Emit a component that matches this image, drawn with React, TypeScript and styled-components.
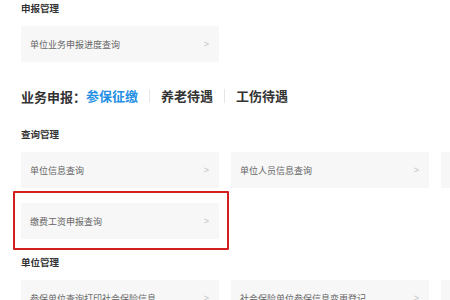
import React from "react";
import styled, { createGlobalStyle } from "styled-components";

const GlobalStyle = createGlobalStyle`
  html, body {
    margin: 0;
    padding: 0;
    background: #ffffff;
  }
  body {
    font-family: "Noto Sans CJK SC", "Noto Sans", sans-serif;
    overflow: hidden;
  }
`;

const sections = [
  {
    title: "查询管理",
    items: ["单位信息查询", "单位人员信息查询", "单位缴费信息查询", "缴费工资申报查询"],
    marked: "缴费工资申报查询",
  },
  {
    title: "单位管理",
    items: ["参保单位查询打印社会保险信息", "社会保险单位参保信息变更登记", "单位信息变更"],
    marked: "",
  },
];

const tabs = ["参保征缴", "养老待遇", "工伤待遇"];

function Card({ text, marked }: { text: string; marked?: boolean }) {
  return (
    <StCard $marked={marked}>
      <StCardText>{text}</StCardText>
      <StArrow>&gt;</StArrow>
    </StCard>
  );
}

function App() {
  return (
    <>
      <GlobalStyle />
      <StPage>
        <StSection>
          <StLabel>申报管理</StLabel>
          <StGrid>
            <Card text="单位业务申报进度查询" />
          </StGrid>
        </StSection>

        <StTabs>
          <StTabTitle>业务申报：</StTabTitle>
          {tabs.map((tab, i) => (
            <StTab key={tab} $active={i === 0} $first={i === 0}>
              {tab}
            </StTab>
          ))}
        </StTabs>

        <StSection $top={20}>
          <StLabel>{sections[0].title}</StLabel>
          <StGrid>
            {sections[0].items.map((item) => (
              <Card key={item} text={item} marked={item === sections[0].marked} />
            ))}
          </StGrid>
        </StSection>

        <StSection $top={15}>
          <StLabel>{sections[1].title}</StLabel>
          <StGrid>
            {sections[1].items.map((item) => (
              <Card key={item} text={item} />
            ))}
          </StGrid>
        </StSection>
      </StPage>
    </>
  );
}

export default App;

const StPage = styled.div`
  width: 450px;
  height: 300px;
  overflow: hidden;
  padding-left: 21px;
  box-sizing: border-box;
`;

const StSection = styled.div<{ $top?: number }>`
  margin-top: ${({ $top }) => $top || 0}px;
`;

const StLabel = styled.div`
  font-size: 9.5px;
  line-height: 16px;
  font-weight: 600;
  color: #333333;
  margin-bottom: 10px;
`;

const StGrid = styled.div`
  display: grid;
  grid-template-columns: repeat(3, 198px);
  column-gap: 12px;
  row-gap: 15px;
`;

const StCard = styled.div<{ $marked?: boolean }>`
  position: relative;
  display: flex;
  align-items: center;
  justify-content: space-between;
  height: 36px;
  padding: 0 10px 0 9px;
  background-color: #f7f7f7;
  box-sizing: border-box;
  ${({ $marked }) =>
    $marked &&
    `
    &::after {
      content: "";
      position: absolute;
      left: -8px;
      right: -10px;
      top: -12px;
      bottom: -11px;
      border: 2px solid #d2201f;
      border-radius: 1px;
      pointer-events: none;
    }
  `}
`;

const StCardText = styled.span`
  font-size: 9px;
  color: #666666;
  white-space: nowrap;
`;

const StArrow = styled.span`
  font-family: "Liberation Sans", sans-serif;
  font-size: 9px;
  color: #c4c4c4;
`;

const StTabs = styled.div`
  display: flex;
  align-items: center;
  margin-top: 24px;
  height: 20px;
  font-size: 13px;
  font-weight: 700;
`;

const StTabTitle = styled.span`
  color: #333333;
`;

const StTab = styled.span<{ $active?: boolean; $first?: boolean }>`
  color: ${({ $active }) => ($active ? "#2590e3" : "#333333")};
  padding: 0 11px;
  line-height: 14px;
  border-left: ${({ $first }) => ($first ? "none" : "1px solid #e6e6e6")};
  ${({ $first }) => $first && "padding-left: 0;"}
`;
